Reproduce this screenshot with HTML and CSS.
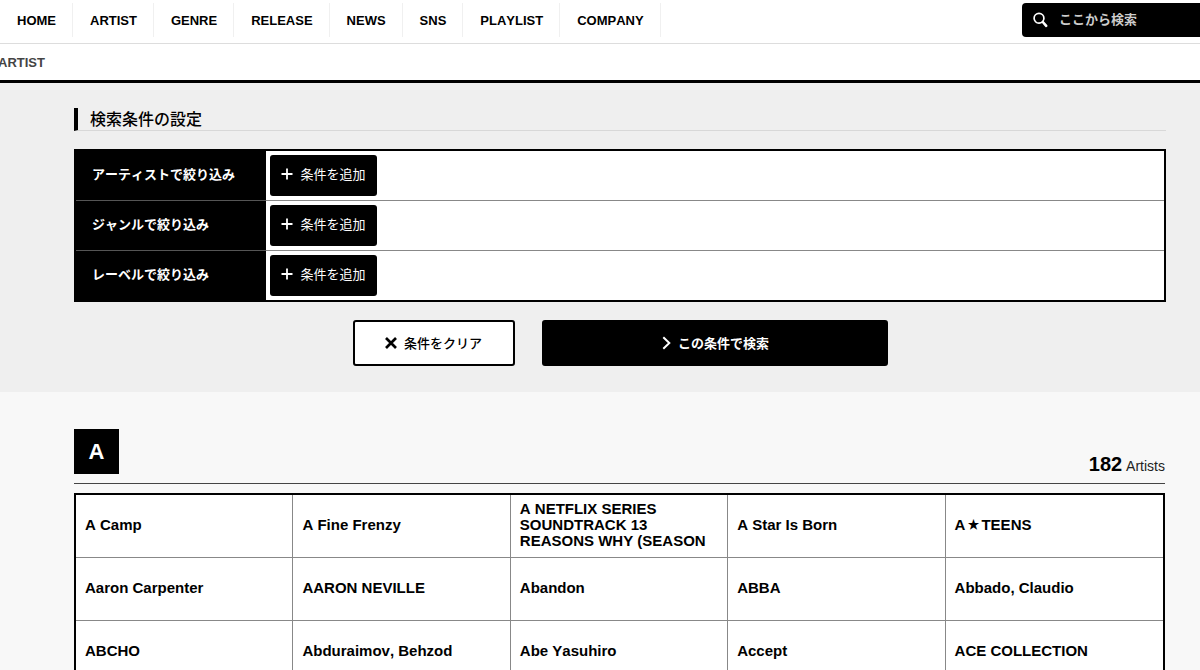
FILE: index.html
```html
<!DOCTYPE html>
<html lang="ja">
<head>
<meta charset="utf-8">
<title>ARTIST</title>
<link rel="stylesheet" href="styles.css">
</head>
<body>
<header class="header">
  <nav class="nav">
    <a class="nav-link" href="#">HOME</a>
    <a class="nav-link" href="#">ARTIST</a>
    <a class="nav-link" href="#">GENRE</a>
    <a class="nav-link" href="#">RELEASE</a>
    <a class="nav-link" href="#">NEWS</a>
    <a class="nav-link" href="#">SNS</a>
    <a class="nav-link" href="#">PLAYLIST</a>
    <a class="nav-link" href="#">COMPANY</a>
  </nav>
  <form class="search">
    <svg class="search-icon" viewBox="0 0 16 16" width="16" height="16" aria-hidden="true"><circle cx="6" cy="6.3" r="4.9" fill="none" stroke="#fff" stroke-width="1.7"/><path d="M9.8 10L13.2 13.8" stroke="#fff" stroke-width="2.6" stroke-linecap="round"/></svg>
    <input class="search-input" type="search" placeholder="ここから検索" aria-label="ここから検索">
  </form>
</header>
<div class="breadcrumb">ARTIST</div>
<main>
  <section class="filter">
    <h1 class="filter-title">検索条件の設定</h1>
    <table class="filter-table">
      <tr>
        <th scope="row">アーティストで絞り込み</th>
        <td><button class="add" type="button"><svg viewBox="0 0 12 12" width="12" height="12" aria-hidden="true"><path d="M6 0.5V11.5M0.5 6H11.5" stroke="#fff" stroke-width="1.8"/></svg>条件を追加</button></td>
      </tr>
      <tr>
        <th scope="row">ジャンルで絞り込み</th>
        <td><button class="add" type="button"><svg viewBox="0 0 12 12" width="12" height="12" aria-hidden="true"><path d="M6 0.5V11.5M0.5 6H11.5" stroke="#fff" stroke-width="1.8"/></svg>条件を追加</button></td>
      </tr>
      <tr>
        <th scope="row">レーベルで絞り込み</th>
        <td><button class="add" type="button"><svg viewBox="0 0 12 12" width="12" height="12" aria-hidden="true"><path d="M6 0.5V11.5M0.5 6H11.5" stroke="#fff" stroke-width="1.8"/></svg>条件を追加</button></td>
      </tr>
    </table>
    <div class="actions">
      <button class="action action-clear" type="button"><svg viewBox="0 0 12 12" width="12" height="14" aria-hidden="true"><path d="M1 1L11 11M11 1L1 11" stroke="#000" stroke-width="2.7"/></svg><span class="action-label">条件をクリア</span></button>
      <button class="action action-submit" type="button"><svg viewBox="0 0 9 14" width="9" height="14" aria-hidden="true"><path d="M1.3 1.3L7.3 7L1.3 12.7" fill="none" stroke="#fff" stroke-width="2"/></svg><span class="action-label">この条件で検索</span></button>
    </div>
  </section>
  <section class="artists">
    <div class="artists-head">
      <h2 class="letter">A</h2>
      <p class="count"><strong>182</strong> Artists</p>
    </div>
    <div class="artist-grid">
      <a href="#">A Camp</a>
      <a href="#">A Fine Frenzy</a>
      <a href="#">A NETFLIX SERIES SOUNDTRACK 13 REASONS WHY (SEASON</a>
      <a href="#">A Star Is Born</a>
      <a href="#">A<span class="star">★</span>TEENS</a>
      <a href="#">Aaron Carpenter</a>
      <a href="#">AARON NEVILLE</a>
      <a href="#">Abandon</a>
      <a href="#">ABBA</a>
      <a href="#">Abbado, Claudio</a>
      <a href="#">ABCHO</a>
      <a href="#">Abduraimov, Behzod</a>
      <a href="#">Abe Yasuhiro</a>
      <a href="#">Accept</a>
      <a href="#">ACE COLLECTION</a>
    </div>
  </section>
</main>
</body>
</html>
```
FILE: styles.css
```css
* {
  box-sizing: border-box;
}

body {
  margin: 0;
  background: #f8f8f8;
  color: #000;
  font-family: "Liberation Sans", "Noto Sans CJK JP", sans-serif;
  font-size: 13px;
  font-kerning: none;
}

a {
  color: inherit;
  text-decoration: none;
}

button,
input {
  font: inherit;
}

.header {
  display: flex;
  justify-content: space-between;
  padding: 3px 0 6px;
  background: #fff;
  border-bottom: 1px solid #ddd;
}

.nav {
  display: flex;
}

.nav-link {
  padding: 2px 16px 0 17px;
  border-right: 1px solid #f0f0f0;
  line-height: 32px;
  font-weight: bold;
}

.search {
  display: flex;
  align-items: center;
  gap: 10px;
  width: 178px;
  height: 34px;
  padding-left: 11px;
  background: #000;
  border-radius: 4px 0 0 4px;
}

.search-icon {
  flex: none;
}

.search-input {
  flex: 1;
  min-width: 0;
  padding: 0 0 2px;
  background: none;
  border: 0;
  color: #fff;
  font-weight: bold;
}

.search-input::placeholder {
  color: #ccc;
}

.breadcrumb {
  margin-left: -2px;
  padding-top: 2px;
  background: #fff;
  border-bottom: 3px solid #000;
  color: #444;
  font-weight: bold;
  line-height: 34px;
}

.filter {
  padding: 25px 34px 26px 74px;
  background: #efefef;
}

.filter-title {
  margin: 0 0 18px;
  padding: 2px 0 0 12px;
  border-left: 4px solid #000;
  border-bottom: 1px solid #d8d8d8;
  font-size: 16px;
  font-weight: 500;
  line-height: 20px;
}

.filter-table {
  width: 100%;
  background: #fff;
  border: 2px solid #000;
  border-spacing: 0;
}

.filter-table th {
  width: 190px;
  padding: 0 0 4px 16px;
  background: #000;
  color: #fff;
  text-align: left;
}

.filter-table td {
  padding: 4px;
}

.filter-table tr + tr th {
  border-top: 1px solid #555;
}

.filter-table tr + tr td {
  border-top: 1px solid #888;
}

.add {
  display: flex;
  align-items: center;
  justify-content: center;
  gap: 7px;
  width: 107px;
  height: 41px;
  padding: 0 0 4px;
  background: #000;
  border: 0;
  border-radius: 3px;
  color: #fff;
}

.actions {
  display: flex;
  justify-content: center;
  gap: 27px;
  margin-top: 18px;
}

.action {
  display: flex;
  align-items: center;
  justify-content: center;
  gap: 7px;
  height: 46px;
  border: 2px solid #000;
  border-radius: 3px;
}

.action-label {
  padding-bottom: 2px;
}

.action-clear {
  width: 162px;
  background: #fff;
  color: #000;
  font-weight: 500;
}

.action-submit {
  width: 346px;
  padding-left: 8px;
  background: #000;
  color: #fff;
  font-weight: bold;
}

.artists {
  padding: 37px 35px 40px 74px;
}

.artists-head {
  display: flex;
  align-items: flex-end;
  justify-content: space-between;
  margin-bottom: 9px;
  border-bottom: 1px solid #444;
}

.letter {
  width: 45px;
  margin: 0 0 9px;
  background: #000;
  color: #fff;
  font-size: 22px;
  line-height: 45px;
  text-align: center;
}

.count {
  margin: 0 0 7px;
  color: #222;
  font-size: 14px;
}

.count strong {
  color: #000;
  font-size: 20px;
}

.artist-grid {
  display: grid;
  grid-template-columns: repeat(5, 1fr);
  grid-auto-rows: minmax(63px, auto);
  background: #fff;
  border: 2px solid #000;
}

.artist-grid a {
  display: flex;
  align-items: center;
  padding: 0 9px 2px;
  border-right: 1px solid #888;
  border-bottom: 1px solid #888;
  font-size: 15px;
  font-weight: bold;
  line-height: 16px;
}

.artist-grid a:nth-child(5n) {
  border-right: 0;
}

.star {
  padding: 0 2px;
  font-size: 12px;
}
```
